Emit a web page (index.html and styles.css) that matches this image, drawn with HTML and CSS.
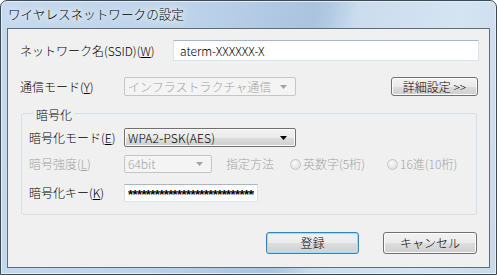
FILE: index.html
```html
<!DOCTYPE html>
<html lang="ja">
<head>
    <meta charset="UTF-8">
    <meta name="viewport" content="width=device-width, initial-scale=1.0">
    <title>ワイヤレスネットワークの設定</title>

    <link rel="stylesheet" href="styles.css">
</head>
<body>
    <div class="window">
        <div class="titlebar">
            <span class="title">ワイヤレスネットワークの設定</span>
        </div>

        <div class="client">
            <div class="row row-ssid">
                <span class="label w-ssid">ネットワーク名(SSID)(<u>W</u>)</span>
                <input class="textbox ssid" type="text" value="aterm-XXXXXX-X">
            </div>

            <div class="row row-mode">
                <span class="label w-main">通信モード(<u>Y</u>)</span>
                <div class="combo combo-mode disabled">
                    <span>インフラストラクチャ通信</span>
                    <svg class="arrow" width="7" height="4" viewBox="0 0 7 4"><path d="M0 0h7L3.5 4z"/></svg>
                </div>
                <button class="btn btn-detail">詳細設定 &gt;&gt;</button>
            </div>

            <fieldset class="group">
                <legend>暗号化</legend>

                <div class="row row-enc">
                    <span class="label w-group">暗号化モード(<u>E</u>)</span>
                    <div class="combo combo-enc">
                        <span>WPA2-PSK(AES)</span>
                        <svg class="arrow" width="7" height="4" viewBox="0 0 7 4"><path d="M0 0h7L3.5 4z"/></svg>
                    </div>
                </div>

                <div class="row row-strength">
                    <span class="label w-group disabled-text">暗号強度(<u>L</u>)</span>
                    <div class="combo combo-bits disabled">
                        <span>64bit</span>
                        <svg class="arrow" width="7" height="4" viewBox="0 0 7 4"><path d="M0 0h7L3.5 4z"/></svg>
                    </div>
                    <span class="disabled-text method">指定方法</span>
                    <span class="radio"></span>
                    <span class="disabled-text">英数字(5桁)</span>
                    <span class="radio radio-hex"></span>
                    <span class="disabled-text">16進(10桁)</span>
                </div>

                <div class="row row-key">
                    <span class="label w-group">暗号化キー(<u>K</u>)</span>
                    <input class="textbox key" type="text" value="****************************************">
                </div>
            </fieldset>

            <div class="actions">
                <button class="btn btn-default btn-ok">登録</button>
                <button class="btn btn-cancel">キャンセル</button>
            </div>
        </div>
    </div>
</body>
</html>
```

FILE: styles.css
```css
html, body{
    margin: 0;
    padding: 0;
    background: #ffffff;
}

body{
    font-family: "Noto Sans CJK JP", "DejaVu Sans", sans-serif;
    font-size: 12px;
    font-weight: 300;
    color: #000000;
}

.window{
    width: 497px;
    height: 275px;
    box-sizing: border-box;
    border: 1px solid #3b4a58;
    border-radius: 7px 7px 0 0;
    background: linear-gradient(100deg, #c6daee 0%, #bcd3ea 35%, #aac4de 58%, #b2cbe3 61%, #cbdcee 66%, #d5e4f2 85%, #c9d9e7 100%);
    box-shadow: inset 0 0 0 1px #e4eef8;
    display: flex;
    flex-direction: column;
}

.titlebar{
    height: 27px;
    display: flex;
    align-items: center;
    padding-left: 7px;
    padding-bottom: 1px;
    box-sizing: border-box;
}

.title{
    font-size: 12.6px;
    line-height: 14px;
    text-shadow: 0 0 6px #ffffff, 0 0 10px #ffffff, 0 0 14px #eef5fb;
}

.client{
    height: 240px;
    margin: 0 6px;
    box-sizing: border-box;
    border: 1px solid #5f6d7a;
    background: #f0f0f0;
    padding: 11px 10px 0 12px;
    display: flex;
    flex-direction: column;
}

.row{
    display: flex;
    align-items: center;
}

.label{
    flex: none;
    line-height: 14px;
    white-space: nowrap;
}

.w-ssid{ width: 153px; }
.w-main{ width: 104px; }
.w-group{ width: 95px; }

.disabled-text{
    color: #a3a3a3;
    white-space: nowrap;
    line-height: 14px;
}

.row-ssid{ height: 21px; }
.row-mode{ height: 19px; margin-top: 16px; }

.textbox{
    box-sizing: border-box;
    margin: 0;
    border: 1px solid #dbe3ea;
    border-top-color: #abb5c0;
    background: #ffffff;
    font-family: "Noto Sans CJK JP", "DejaVu Sans", sans-serif;
    font-size: 12px;
    font-weight: 300;
    color: #000000;
    outline: none;
}

.ssid{
    flex: 1;
    height: 21px;
    padding: 0 6px;
}

.key{
    width: 134px;
    height: 18px;
    padding: 3px 3px 0;
    font-family: "Liberation Sans", sans-serif;
    font-size: 13px;
    font-weight: 700;
    letter-spacing: -0.6px;
    overflow: hidden;
}

.combo{
    box-sizing: border-box;
    display: flex;
    align-items: center;
    justify-content: space-between;
    border: 1px solid #707070;
    border-radius: 2px;
    padding: 0 8px 0 3px;
    background: linear-gradient(#f2f2f2 0%, #ebebeb 50%, #dddddd 51%, #cfcfcf 100%);
    box-shadow: inset 0 0 0 1px #fbfbfb;
    line-height: 14px;
    white-space: nowrap;
}

.combo .arrow{
    fill: #000000;
    flex: none;
}

.combo.disabled{
    border-color: #c5c5c5;
    background: #f4f4f4;
    box-shadow: none;
    color: #a3a3a3;
}

.combo.disabled .arrow{
    fill: #a3a3a3;
}

.combo-mode{ width: 172px; height: 19px; }
.combo-enc{ width: 172px; height: 19px; letter-spacing: 0.2px; }
.combo-bits{ width: 88px; height: 18px; }

.btn{
    box-sizing: border-box;
    margin: 0;
    padding: 0;
    border: 1px solid #707070;
    border-radius: 3px;
    background: linear-gradient(#f2f2f2 0%, #ebebeb 50%, #dddddd 51%, #cfcfcf 100%);
    box-shadow: inset 0 0 0 1px #fcfcfc;
    font-family: "Noto Sans CJK JP", "DejaVu Sans", sans-serif;
    font-size: 12px;
    font-weight: 300;
    line-height: 14px;
    color: #000000;
}

.btn-detail{
    width: 87px;
    height: 19px;
    margin-left: auto;
    margin-right: 1px;
}

.group{
    margin: 8px 2px 0 1px;
    padding: 6px 0 12px 7px;
    min-width: 0;
    border: 1px solid #d5dfe5;
    border-radius: 3px;
}

.group legend{
    margin-left: 5px;
    padding: 4px 2px 0;
    line-height: 14px;
}

.row-enc{ height: 19px; }
.row-strength{ height: 18px; margin-top: 8px; }
.row-key{ height: 18px; margin-top: 11px; }

.method{
    margin-left: 14px;
    margin-right: 16px;
}

.radio{
    flex: none;
    width: 11px;
    height: 11px;
    box-sizing: border-box;
    border: 1px solid #c6c6c6;
    border-radius: 50%;
    background: radial-gradient(circle at 40% 35%, #fafafa 0%, #e6e6e6 60%, #d8d8d8 100%);
    margin-right: 2px;
}

.radio-hex{
    margin-left: 22px;
}

.actions{
    display: flex;
    justify-content: flex-end;
    gap: 24px;
    margin-top: 17px;
    margin-right: 2px;
}

.btn-ok,
.btn-cancel{
    height: 22px;
}

.btn-ok{ width: 93px; }
.btn-cancel{ width: 94px; }

.btn-default{
    border-color: #3c7fb1;
    box-shadow: inset 0 0 0 1px #9fdcf5, inset 0 0 2px 1px #c9eefc;
}
```
